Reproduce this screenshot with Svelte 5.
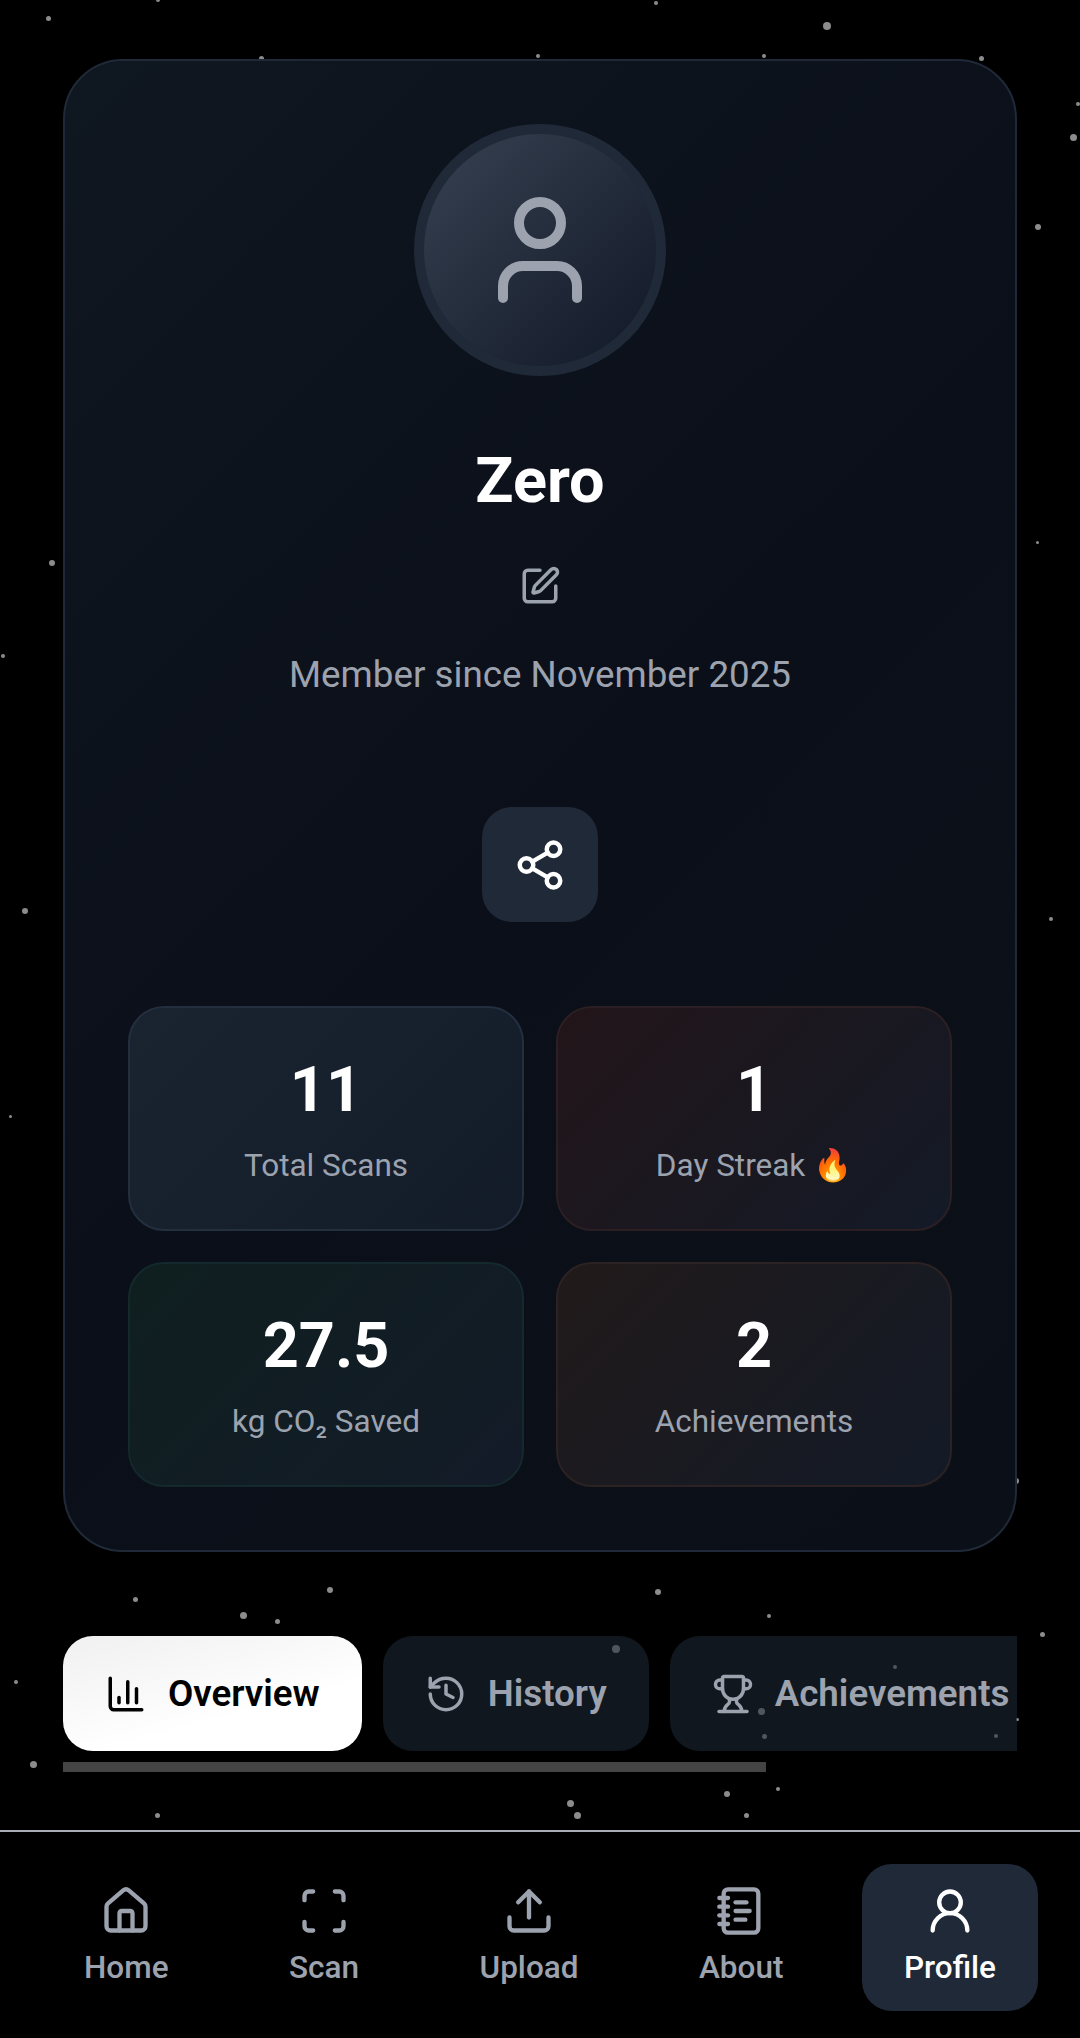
<script>
  const stars = [
    [48,18,5],[158,0,4],[656,3,4],[827,26,8],[261,58,5],[538,56,4],[764,56,4],[981,58,5],
    [1073,137,7],[1078,104,4],[1038,227,6],[1037,542,3],[52,563,6],[3,656,4],[25,911,6],[1051,919,4],
    [10,1116,3],[1016,1481,6],[135,1599,5],[330,1590,6],[658,1592,6],[243,1615,7],[277,1621,5],
    [769,1616,4],[1042,1634,5],[16,1682,4],[616,1649,8],[895,1667,4],[761,1711,7],[764,1736,5],
    [996,1736,4],[1017,1719,3],[33,1764,7],[778,1789,4],[727,1794,6],[570,1803,7],[577,1815,7],
    [746,1815,5],[157,1815,5]
  ];

  const stats = [
    { value: "11", label: "Total Scans", tone: "blue" },
    { value: "1", label: "Day Streak 🔥", tone: "red" },
    { value: "27.5", label: "kg CO₂ Saved", tone: "green" },
    { value: "2", label: "Achievements", tone: "amber" }
  ];

  const tabs = [
    { name: "Overview", active: true, icon: ["M3 3v16a2 2 0 0 0 2 2h16", "M18 17V9", "M13 17V5", "M8 17v-3"] },
    { name: "History", icon: ["M3 12a9 9 0 1 0 9-9 9.75 9.75 0 0 0-6.74 2.74L3 8", "M3 3v5h5", "M12 7v5l4 2"] },
    { name: "Achievements", icon: [
      "M10 14.66v1.626a2 2 0 0 1-.976 1.696A5 5 0 0 0 7 21.978",
      "M14 14.66v1.626a2 2 0 0 0 .976 1.696A5 5 0 0 1 17 21.978",
      "M18 9h1.5a1 1 0 0 0 0-5H18", "M4 22h16",
      "M6 9a6 6 0 0 0 12 0V3a1 1 0 0 0-1-1H7a1 1 0 0 0-1 1z",
      "M6 9H4.5a1 1 0 0 1 0-5H6"
    ] }
  ];

  const nav = [
    { name: "Home", icon: ["M15 21v-8a1 1 0 0 0-1-1h-4a1 1 0 0 0-1 1v8", "M3 10a2 2 0 0 1 .709-1.528l7-6a2 2 0 0 1 2.582 0l7 6A2 2 0 0 1 21 10v9a2 2 0 0 1-2 2H5a2 2 0 0 1-2-2z"] },
    { name: "Scan", icon: ["M3 7V5a2 2 0 0 1 2-2h2", "M17 3h2a2 2 0 0 1 2 2v2", "M21 17v2a2 2 0 0 1-2 2h-2", "M7 21H5a2 2 0 0 1-2-2v-2"] },
    { name: "Upload", icon: ["M21 15v4a2 2 0 0 1-2 2H5a2 2 0 0 1-2-2v-4", "M17 8l-5-5-5 5", "M12 3v12"] },
    { name: "About", icon: ["M2 6h4", "M2 10h4", "M2 14h4", "M2 18h4", "M6 2h12a2 2 0 0 1 2 2v16a2 2 0 0 1-2 2H6a2 2 0 0 1-2-2V4a2 2 0 0 1 2-2z", "M9.5 8h5", "M9.5 12H16", "M9.5 16H14"] },
    { name: "Profile", active: true, icon: ["M17 8a5 5 0 1 1-10 0 5 5 0 0 1 10 0z", "M20 21a8 8 0 0 0-16 0"] }
  ];
</script>

<div class="page">
  {#each stars as [x, y, size]}
    <span class="star" style="left:{x - size / 2}px;top:{y - size / 2}px;width:{size}px;height:{size}px"></span>
  {/each}

  <main class="main">
    <section class="card">
      <div class="avatar">
        <svg width="108" height="108" viewBox="0 0 108 108" fill="none" stroke="#9ca3af" stroke-width="10" stroke-linecap="round">
          <circle cx="54" cy="27" r="21" />
          <path d="M17 102V90a20 20 0 0 1 20-20h34a20 20 0 0 1 20 20v12" />
        </svg>
      </div>
      <h1 class="name">Zero</h1>
      <button class="edit" aria-label="Edit name">
        <svg width="42" height="42" viewBox="0 0 24 24" fill="none" stroke="#9ca3af" stroke-width="2" stroke-linecap="round" stroke-linejoin="round">
          <path d="M12 3H5a2 2 0 0 0-2 2v14a2 2 0 0 0 2 2h14a2 2 0 0 0 2-2v-7" />
          <path d="M18.375 2.625a1 1 0 0 1 3 3l-9.013 9.014a2 2 0 0 1-.853.505l-2.873.84a.5.5 0 0 1-.62-.62l.84-2.873a2 2 0 0 1 .506-.852z" />
        </svg>
      </button>
      <p class="since">Member since November 2025</p>
      <button class="share" aria-label="Share">
        <svg width="54" height="54" viewBox="0 0 24 24" fill="none" stroke="#fff" stroke-width="2" stroke-linecap="round" stroke-linejoin="round">
          <circle cx="18" cy="5" r="3" />
          <circle cx="6" cy="12" r="3" />
          <circle cx="18" cy="19" r="3" />
          <path d="M8.59 13.51l6.83 3.98" />
          <path d="M15.41 6.51l-6.82 3.98" />
        </svg>
      </button>
      <div class="stats">
        {#each stats as stat}
          <div class="stat {stat.tone}">
            <div class="value">{stat.value}</div>
            <div class="label">{stat.label}</div>
          </div>
        {/each}
      </div>
    </section>

    <div class="tabs">
      {#each tabs as tab}
        <div class="tab" class:active={tab.active}>
          <svg width="42" height="42" viewBox="0 0 24 24" fill="none" stroke="currentColor" stroke-width="2" stroke-linecap="round" stroke-linejoin="round">
            {#each tab.icon as d}<path {d} />{/each}
          </svg>
          <span>{tab.name}</span>
        </div>
      {/each}
    </div>
    <div class="scrollbar"></div>
  </main>

  <nav class="nav">
    {#each nav as item}
      <div class="nav-item" class:active={item.active}>
        <svg width="52" height="52" viewBox="0 0 24 24" fill="none" stroke="currentColor" stroke-width="2" stroke-linecap="round" stroke-linejoin="round">
          {#each item.icon as d}<path {d} />{/each}
        </svg>
        <span>{item.name}</span>
      </div>
    {/each}
  </nav>
</div>

<style>
  :global(body) {
    background: #000;
    font-family: Roboto, "Liberation Sans", sans-serif;
  }
  .page {
    position: relative;
    height: 2038px;
    display: flex;
    flex-direction: column;
    overflow: hidden;
    background: #000;
  }
  .star {
    position: absolute;
    border-radius: 50%;
    background: #8c8c8c;
  }
  .main {
    position: relative;
    flex: 1;
    padding: 59px 63px 0;
  }
  .card {
    display: flex;
    flex-direction: column;
    align-items: center;
    height: 1493px;
    box-sizing: border-box;
    padding: 63px 63px 0;
    border: 2px solid #1f2937;
    border-radius: 60px;
    background: linear-gradient(135deg, #0f1720, #0b0f19 50%, #0b1018);
  }
  .avatar {
    box-sizing: border-box;
    width: 252px;
    height: 252px;
    flex: none;
    display: flex;
    align-items: center;
    justify-content: center;
    border: 10px solid #1f2937;
    border-radius: 50%;
    background: linear-gradient(135deg, #374151, #111827);
  }
  .name {
    margin: 69px 0 0;
    font-size: 63px;
    line-height: 72px;
    font-weight: 700;
    color: #fff;
  }
  .edit {
    display: flex;
    margin-top: 39px;
    padding: 9px;
    background: none;
    border: 0;
  }
  .since {
    margin: 32px 0 0;
    font-size: 36.75px;
    line-height: 54px;
    color: #9ca3af;
  }
  .share {
    display: flex;
    align-items: center;
    justify-content: center;
    width: 116px;
    height: 115px;
    margin-top: 105px;
    padding: 0;
    border: 0;
    border-radius: 30px;
    background: #1f2937;
  }
  .stats {
    display: grid;
    grid-template-columns: 1fr 1fr;
    gap: 31px 32px;
    width: 100%;
    margin-top: 84px;
  }
  .stat {
    box-sizing: border-box;
    height: 225px;
    display: flex;
    flex-direction: column;
    align-items: center;
    padding-top: 46px;
    border: 2px solid;
    border-radius: 36px;
  }
  .blue {
    border-color: #232e3f;
    background: linear-gradient(135deg, #1a2431, #131b28);
  }
  .red {
    border-color: #2c1f24;
    background: linear-gradient(135deg, #221519, #131a27);
  }
  .green {
    border-color: #14292b;
    background: linear-gradient(135deg, #0f1f1f, #131b28);
  }
  .amber {
    border-color: #2c2223;
    background: linear-gradient(135deg, #211a1a, #131a27);
  }
  .value {
    font-size: 63px;
    line-height: 72px;
    font-weight: 700;
    color: #fff;
  }
  .label {
    margin-top: 19px;
    font-size: 31.5px;
    line-height: 42px;
    color: #9ca3af;
  }
  .tabs {
    display: flex;
    gap: 21px;
    margin-top: 84px;
    overflow: hidden;
  }
  .tab {
    flex: none;
    display: flex;
    align-items: center;
    gap: 21px;
    height: 115px;
    padding: 0 42px;
    border-radius: 30px;
    background: rgba(31, 41, 55, 0.55);
    color: #9ca3af;
    font-size: 36.75px;
    font-weight: 600;
  }
  .tab.active {
    background: linear-gradient(165deg, #f0f0f0, #fff 65%);
    color: #000;
  }
  .scrollbar {
    width: 703px;
    height: 10px;
    margin-top: 11px;
    background: #444;
  }
  .nav {
    position: relative;
    height: 208px;
    box-sizing: border-box;
    flex: none;
    display: flex;
    justify-content: space-between;
    align-items: flex-start;
    padding: 32px 42px 0;
    border-top: 2px solid #a9adb5;
    background: #000;
  }
  .nav-item {
    display: flex;
    flex-direction: column;
    align-items: center;
    gap: 10px;
    height: 147px;
    box-sizing: border-box;
    padding: 21px 42px 0;
    border-radius: 30px;
    color: #9ca3af;
    font-size: 31.5px;
    line-height: 42px;
    font-weight: 500;
  }
  .nav-item.active {
    background: #1f2937;
    color: #fff;
  }
</style>
